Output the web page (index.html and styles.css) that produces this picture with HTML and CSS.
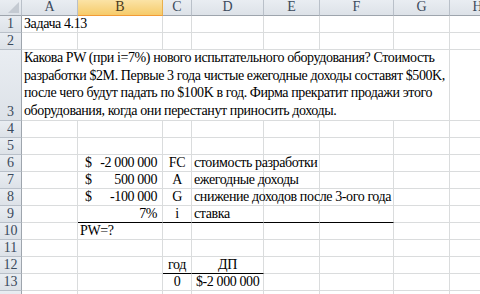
FILE: index.html
```html
<!DOCTYPE html>
<html lang="ru">
<head>
  <meta charset="UTF-8" />
  <title>Задача 4.13</title>
  <link rel="stylesheet" href="styles.css">
</head>
<body>
  <div class="sheet">
    <div class="row head">
      <div class="corner"><span class="tri"></span></div>
      <div class="ch">A</div>
      <div class="ch sel">B</div>
      <div class="ch">C</div>
      <div class="ch">D</div>
      <div class="ch">E</div>
      <div class="ch">F</div>
      <div class="ch">G</div>
      <div class="ch">H</div>
    </div>

    <div class="row">
      <div class="rh">1</div>
      <div class="c over">Задача 4.13</div>
      <div class="c"></div><div class="c"></div><div class="c"></div><div class="c"></div><div class="c"></div><div class="c"></div><div class="c"></div>
    </div>

    <div class="row">
      <div class="rh">2</div>
      <div class="c"></div><div class="c"></div><div class="c"></div><div class="c"></div><div class="c"></div><div class="c"></div><div class="c"></div><div class="c"></div>
    </div>

    <div class="row tall">
      <div class="rh">3</div>
      <div class="c merged">Какова PW (при i=7%) нового испытательного оборудования? Стоимость разработки $2M. Первые 3 года чистые ежегодные доходы составят $500K, после чего будут падать по $100K в год. Фирма прекратит продажи этого оборудования, когда они перестанут приносить доходы.</div>
      <div class="c"></div>
    </div>

    <div class="row">
      <div class="rh">4</div>
      <div class="c"></div><div class="c"></div><div class="c"></div><div class="c"></div><div class="c"></div><div class="c"></div><div class="c"></div><div class="c"></div>
    </div>

    <div class="row">
      <div class="rh">5</div>
      <div class="c"></div><div class="c"></div><div class="c"></div><div class="c"></div><div class="c"></div><div class="c"></div><div class="c"></div><div class="c"></div>
    </div>

    <div class="row">
      <div class="rh">6</div>
      <div class="c"></div>
      <div class="c money"><span>$</span><span>-2 000 000</span></div>
      <div class="c mid">FC</div>
      <div class="c over">стоимость разработки</div>
      <div class="c"></div><div class="c"></div><div class="c"></div><div class="c"></div>
    </div>

    <div class="row">
      <div class="rh">7</div>
      <div class="c"></div>
      <div class="c money"><span>$</span><span>500 000</span></div>
      <div class="c mid">A</div>
      <div class="c over">ежегодные доходы</div>
      <div class="c"></div><div class="c"></div><div class="c"></div><div class="c"></div>
    </div>

    <div class="row">
      <div class="rh">8</div>
      <div class="c"></div>
      <div class="c money"><span>$</span><span>-100 000</span></div>
      <div class="c mid">G</div>
      <div class="c over">снижение доходов после 3-ого года</div>
      <div class="c"></div><div class="c"></div><div class="c"></div><div class="c"></div>
    </div>

    <div class="row">
      <div class="rh">9</div>
      <div class="c"></div>
      <div class="c num line">7%</div>
      <div class="c mid line">i</div>
      <div class="c line">ставка</div>
      <div class="c line"></div>
      <div class="c line"></div>
      <div class="c"></div><div class="c"></div>
    </div>

    <div class="row">
      <div class="rh">10</div>
      <div class="c"></div>
      <div class="c">PW=?</div>
      <div class="c"></div><div class="c"></div><div class="c"></div><div class="c"></div><div class="c"></div><div class="c"></div>
    </div>

    <div class="row">
      <div class="rh">11</div>
      <div class="c"></div><div class="c"></div><div class="c"></div><div class="c"></div><div class="c"></div><div class="c"></div><div class="c"></div><div class="c"></div>
    </div>

    <div class="row">
      <div class="rh">12</div>
      <div class="c"></div><div class="c"></div>
      <div class="c mid line">год</div>
      <div class="c mid line">ДП</div>
      <div class="c"></div><div class="c"></div><div class="c"></div><div class="c"></div>
    </div>

    <div class="row">
      <div class="rh">13</div>
      <div class="c"></div><div class="c"></div>
      <div class="c mid">0</div>
      <div class="c money tight"><span>$</span><span>-2 000 000</span></div>
      <div class="c"></div><div class="c"></div><div class="c"></div><div class="c"></div>
    </div>

    <div class="row">
      <div class="rh"></div>
      <div class="c"></div><div class="c"></div><div class="c"></div><div class="c"></div><div class="c"></div><div class="c"></div><div class="c"></div><div class="c"></div>
    </div>
  </div>
</body>
</html>
```

FILE: styles.css
```css
body {
  margin: 0;
  background: #fff;
  overflow: hidden;
  font-family: "Liberation Serif", "Times New Roman", serif;
  font-size: 14px;
  letter-spacing: -0.4px;
  color: #000;
}

.sheet {
  width: 506px;
}

.row {
  display: grid;
  grid-template-columns: 22px 56px 85px 29px 72px 56px 74px 56px 56px;
  height: 17px;
}

.row.head {
  height: 16px;
}

.row.tall {
  height: 71px;
}

.corner,
.ch,
.rh {
  box-sizing: border-box;
  background: linear-gradient(#e9edf2, #dde2e8);
  color: #3b4a5c;
  border-right: 1px solid #b9c0c9;
  border-bottom: 1px solid #b9c0c9;
  display: flex;
  align-items: flex-end;
  justify-content: center;
  line-height: 16px;
  letter-spacing: 0;
  overflow: hidden;
}

.head .ch,
.head .corner {
  border-bottom-color: #9ea5ad;
}

.ch.sel {
  background: linear-gradient(#fbe3a6, #f6cb6a);
  border-right-color: #e9b04c;
  border-bottom-color: #f29b36;
  color: #4a3a20;
}

.corner {
  position: relative;
}

.tri {
  position: absolute;
  right: 2px;
  bottom: 2px;
  width: 0;
  height: 0;
  border-left: 11px solid transparent;
  border-bottom: 11px solid #c4cad2;
}

.rh {
  border-right-color: #9ea5ad;
}

.c {
  box-sizing: border-box;
  border-right: 1px solid #dadcdd;
  border-bottom: 1px solid #dadcdd;
  padding: 0 2px;
  line-height: 16px;
  white-space: nowrap;
  display: flex;
  align-items: flex-end;
}

.c.over {
  overflow: visible;
  position: relative;
  z-index: 1;
}

.c.merged {
  grid-column: span 7;
  white-space: normal;
  line-height: 17.5px;
  padding: 0 1px 1px 2px;
  height: 71px;
  display: flex;
  align-items: flex-end;
}

.c.money {
  justify-content: space-between;
  padding: 0 5px 0 7px;
}

.c.money.tight {
  padding: 0 5px 0 4px;
}

.c.num {
  justify-content: flex-end;
  padding-right: 5px;
}

.c.mid {
  justify-content: center;
}

.c.line {
  border-bottom-color: #000;
}
```
